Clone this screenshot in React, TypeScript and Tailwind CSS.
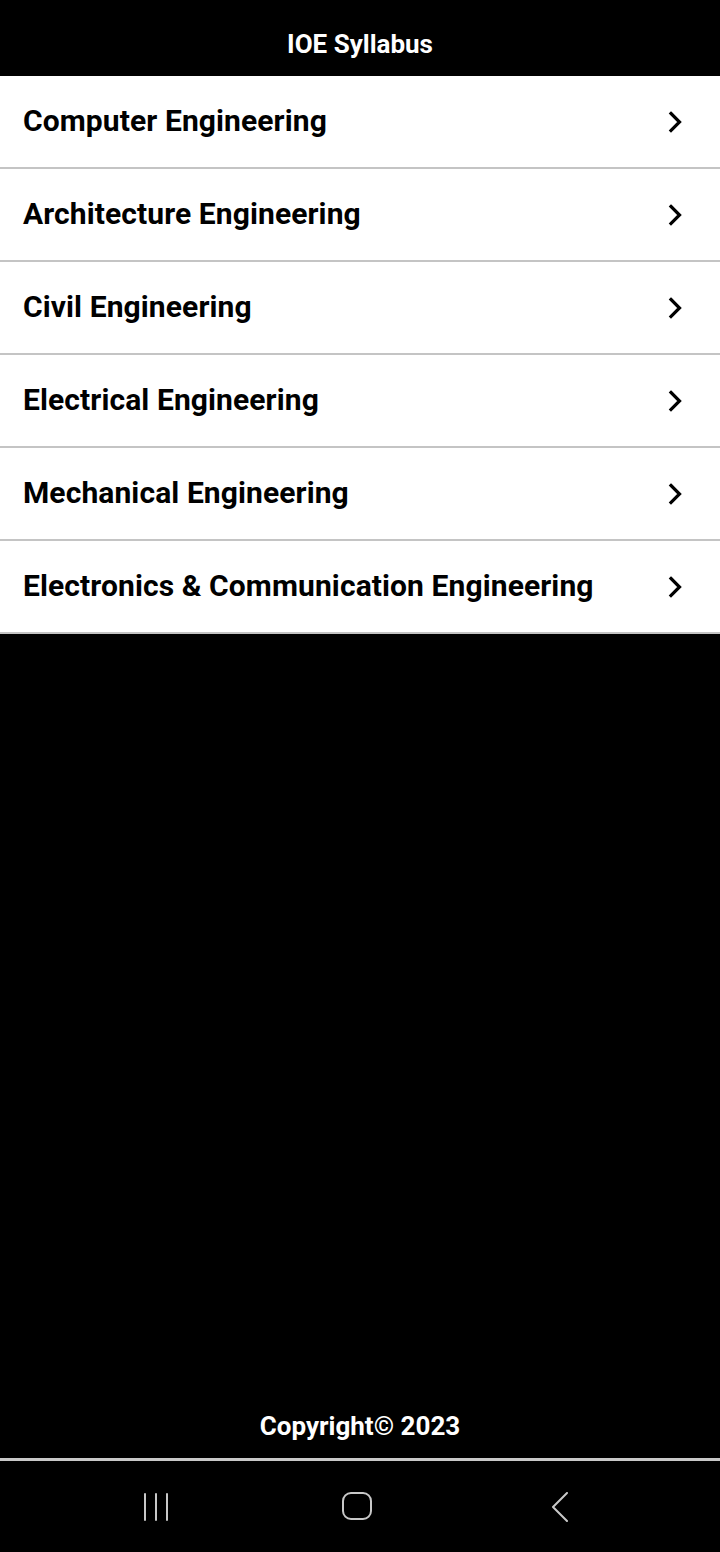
import React from 'react';

const branches = [
  'Computer Engineering',
  'Architecture Engineering',
  'Civil Engineering',
  'Electrical Engineering',
  'Mechanical Engineering',
  'Electronics & Communication Engineering',
];

const Chevron = () => (
  <svg width="20" height="24" viewBox="0 0 20 24" fill="none">
    <path d="M6 3.5 L14.5 12 L6 20.5" stroke="#000" strokeWidth="3.2" strokeLinecap="square" strokeLinejoin="miter" />
  </svg>
);

const App: React.FC = () => {
  return (
    <div
      className="flex flex-col h-[1552px] w-[720px] bg-black"
      style={{ fontFamily: 'Roboto, "Noto Sans", sans-serif' }}
    >
      <header className="h-[76px] flex items-center justify-center pt-[12px]">
        <h1 className="text-white text-[26px] font-bold">IOE Syllabus</h1>
      </header>

      <ul>
        {branches.map((b) => (
          <li
            key={b}
            className="h-[93px] bg-white border-b-2 border-[#c4c4c4] flex items-center justify-between pl-[23px] pr-[35px]"
          >
            <span className="text-[30px] font-bold text-black tracking-[0.1px] -mt-[2px]">{b}</span>
            <Chevron />
          </li>
        ))}
      </ul>

      <div className="flex-1" />

      <footer className="h-[48px] flex items-start justify-center pt-[3px]">
        <span className="text-white text-[26px] font-bold leading-none">Copyright© 2023</span>
      </footer>

      <div className="h-[3px] bg-[#c8c8c8]" />

      <nav className="h-[91px] flex items-center justify-between pl-[142px] pr-[150px]">
        <svg width="30" height="30" viewBox="0 0 30 30" fill="none" stroke="#c8c8c8" strokeWidth="2" strokeLinecap="round">
          <path d="M3 2 V28 M14 2 V28 M25 2 V28" />
        </svg>
        <svg width="32" height="30" viewBox="0 0 32 30" fill="none" stroke="#c8c8c8" strokeWidth="2" className="-ml-[8px] -mt-[2px]">
          <rect x="2" y="2" width="28" height="26" rx="8" />
        </svg>
        <svg width="20" height="30" viewBox="0 0 20 30" fill="none" stroke="#c8c8c8" strokeWidth="2" strokeLinecap="round" strokeLinejoin="round">
          <path d="M17 1 L3 15 L17 29" />
        </svg>
      </nav>
    </div>
  );
};

export default App;
